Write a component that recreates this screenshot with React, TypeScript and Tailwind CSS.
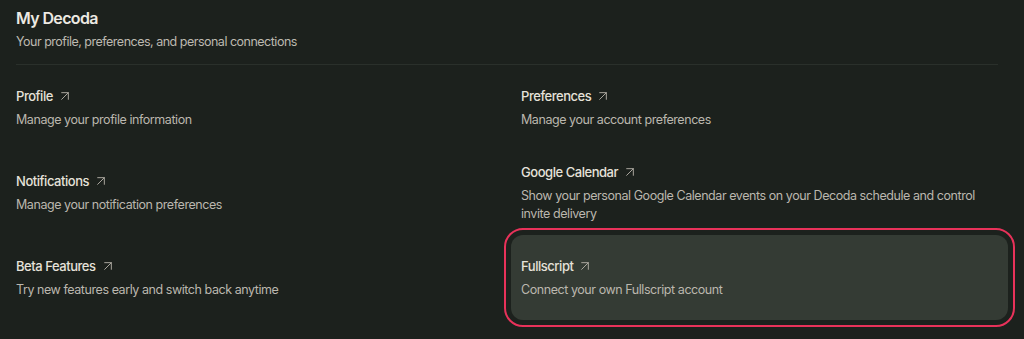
import React from 'react';
import { ArrowUpRight } from 'lucide-react';

interface SettingLink {
  title: string;
  description: string;
  active?: boolean;
}

const links: SettingLink[] = [
  { title: 'Profile', description: 'Manage your profile information' },
  { title: 'Preferences', description: 'Manage your account preferences' },
  { title: 'Notifications', description: 'Manage your notification preferences' },
  {
    title: 'Google Calendar',
    description: 'Show your personal Google Calendar events on your Decoda schedule and control invite delivery',
  },
  { title: 'Beta Features', description: 'Try new features early and switch back anytime' },
  { title: 'Fullscript', description: 'Connect your own Fullscript account', active: true },
];

const LinkCard: React.FC<{ item: SettingLink }> = ({ item }) => (
  <a
    href="#"
    className={`flex h-[85px] flex-col justify-center rounded-xl px-2.5 ${
      item.active ? 'bg-[#343b34] outline-2 outline-offset-[5px] outline-[#e8325a]' : ''
    }`}
  >
    <div className="flex items-center gap-[4px]">
      <span className="text-[13px] font-medium leading-5 tracking-[-0.035em] text-[#e6e2da]">{item.title}</span>
      <ArrowUpRight size={16} strokeWidth={1.5} className="text-[#a9a59d]" />
    </div>
    <p className="mt-[5px] text-[12.5px] leading-[18px] tracking-[-0.035em] text-[#bbb7ae]">{item.description}</p>
  </a>
);

export default function App() {
  return (
    <div
      className="min-h-[339px] bg-[#1c211d] pl-4 pr-[26px] pt-1.5"
      style={{ fontFamily: 'Inter, "Noto Sans", sans-serif' }}
    >
      {/* Header */}
      <h1 className="text-base font-semibold leading-6 tracking-[-0.04em] text-[#ece9e2]">My Decoda</h1>
      <p className="mt-0.5 text-[12.5px] leading-5 tracking-[-0.04em] text-[#bdb9b0]">
        Your profile, preferences, and personal connections
      </p>
      <div className="mt-3 h-px bg-[#2a302b]" />

      {/* Links */}
      <div className="-mx-2.5 grid grid-cols-2 gap-x-2">
        {links.map((item) => (
          <LinkCard key={item.title} item={item} />
        ))}
      </div>
    </div>
  );
}
